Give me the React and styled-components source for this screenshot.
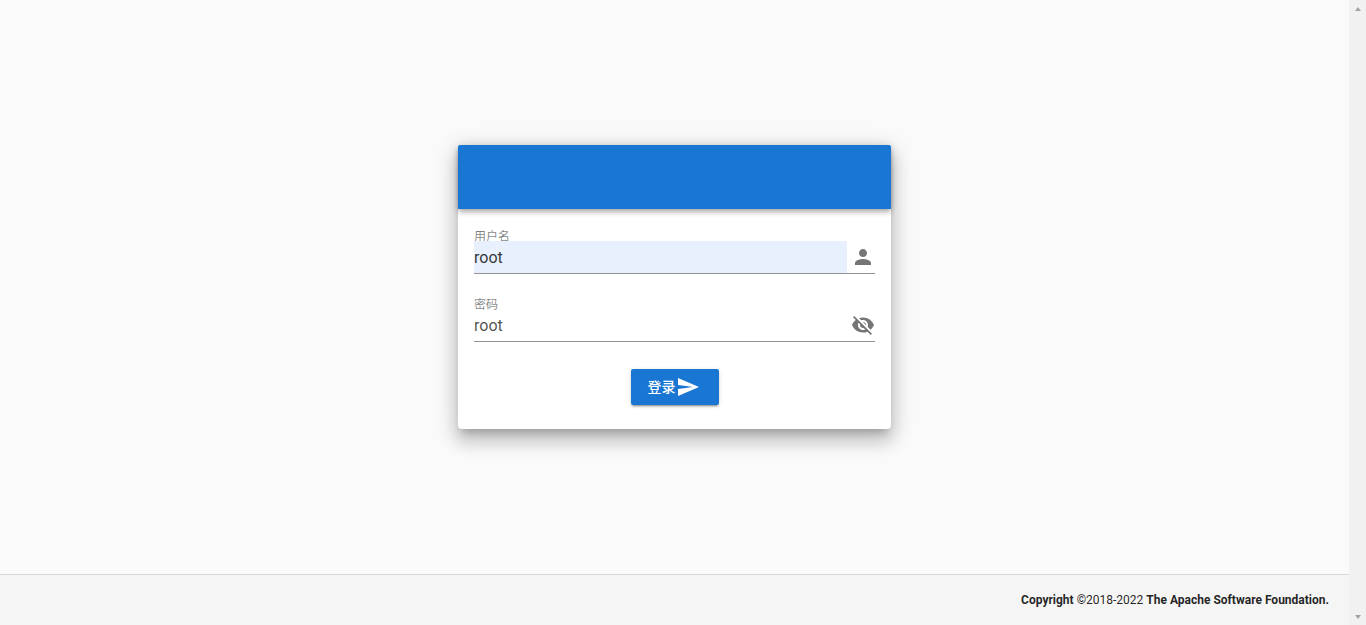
import React from "react"
import styled, { createGlobalStyle } from "styled-components"

const GlobalStyle = createGlobalStyle`
  html, body, #root {
    margin: 0;
    height: 100%;
    overflow: hidden;
  }

  body {
    background: #fafafa;
    font-family: Roboto, "Noto Sans CJK SC", sans-serif;
  }
`

const Window = styled.div`
  display: flex;
  height: 625px;
`

const Page = styled.div`
  flex: 1;
  min-width: 0;
  display: flex;
  flex-direction: column;
`

const Main = styled.main`
  flex: 1;
  display: flex;
  align-items: center;
  justify-content: center;
`

const Card = styled.form`
  width: 433px;
  height: 284px;
  background: #fff;
  border-radius: 4px;
  box-shadow: 0 7px 8px -4px rgba(0, 0, 0, 0.2), 0 12px 17px 2px rgba(0, 0, 0, 0.14),
    0 5px 22px 4px rgba(0, 0, 0, 0.12);
`

const CardHeader = styled.div`
  height: 64px;
  background: #1976d2;
  border-radius: 2px 2px 0 0;
  box-shadow: 0 2px 4px -1px rgba(0, 0, 0, 0.2), 0 4px 5px 0 rgba(0, 0, 0, 0.14),
    0 1px 10px 0 rgba(0, 0, 0, 0.12);
`

const CardBody = styled.div`
  display: flex;
  flex-direction: column;
  padding: 32px 16px 24px;
`

const Field = styled.div`
  position: relative;
  display: flex;
  align-items: center;
  border-bottom: 1px solid rgba(0, 0, 0, 0.42);
  margin-bottom: ${(p) => p.$gap}px;
`

const FieldLabel = styled.label`
  position: absolute;
  top: -11px;
  left: 0;
  font-size: 12px;
  line-height: 14px;
  color: rgba(0, 0, 0, 0.5);
`

const TextInput = styled.input`
  position: relative;
  flex: 1;
  min-width: 0;
  height: 32px;
  padding: 0;
  border: 0;
  outline: 0;
  font: 400 16px Roboto, sans-serif;
  color: ${(p) => (p.$autofilled ? "rgba(0, 0, 0, 0.8)" : "rgba(0, 0, 0, 0.7)")};
  background: ${(p) => (p.$autofilled ? "#e8f0fe" : "transparent")};
`

const FieldIcon = styled.svg`
  flex: none;
  width: 24px;
  height: 24px;
  margin-left: 4px;
  fill: rgba(0, 0, 0, 0.54);
`

const Actions = styled.div`
  display: flex;
  justify-content: center;
`

const SubmitButton = styled.button`
  display: flex;
  align-items: center;
  justify-content: center;
  width: 88px;
  height: 36px;
  padding: 0 2px 0 0;
  border: 0;
  border-radius: 2px;
  background: #1976d2;
  color: #fff;
  font: 500 14px Roboto, "Noto Sans CJK SC", sans-serif;
  box-shadow: 0 3px 1px -2px rgba(0, 0, 0, 0.2), 0 2px 2px 0 rgba(0, 0, 0, 0.14),
    0 1px 5px 0 rgba(0, 0, 0, 0.12);
`

const ButtonLabel = styled.span`
  margin-bottom: 2px;
`

const SendIcon = styled.svg`
  width: 24px;
  height: 24px;
  fill: #fff;
`

const Footer = styled.footer`
  height: 50px;
  display: flex;
  align-items: center;
  justify-content: flex-end;
  padding-right: 20px;
  background: #f5f5f5;
  border-top: 1px solid #d9d9d9;
  font-size: 12px;
  color: rgba(0, 0, 0, 0.87);
`

const FooterText = styled.span`
  white-space: pre;

  b {
    font-weight: 700;
  }
`

const ScrollTrack = styled.div`
  width: 17px;
  flex: none;
  display: flex;
  flex-direction: column;
  justify-content: space-between;
  align-items: center;
  padding: 7px 0 6px;
  box-sizing: border-box;
  background: #f1f1f1;
`

const ScrollArrow = styled.i`
  width: 0;
  height: 0;
  border-left: 3.5px solid transparent;
  border-right: 3.5px solid transparent;
  ${(p) => (p.$down ? "border-top" : "border-bottom")}: 4px solid #a3a3a3;
`

export default function App() {
  return (
    <Window>
      <GlobalStyle />
      <Page>
        <Main>
          <Card onSubmit={(e) => e.preventDefault()}>
            <CardHeader />
            <CardBody>
              <Field $gap={35}>
                <FieldLabel>用户名</FieldLabel>
                <TextInput $autofilled defaultValue="root" />
                <FieldIcon viewBox="0 0 24 24">
                  <path d="M12 12c2.21 0 4-1.79 4-4s-1.79-4-4-4-4 1.79-4 4 1.79 4 4 4zm0 2c-2.67 0-8 1.34-8 4v2h16v-2c0-2.66-5.33-4-8-4z" />
                </FieldIcon>
              </Field>
              <Field $gap={27}>
                <FieldLabel>密码</FieldLabel>
                <TextInput defaultValue="root" />
                <FieldIcon viewBox="0 0 24 24">
                  <path d="M12 7c2.76 0 5 2.24 5 5 0 .65-.13 1.26-.36 1.83l2.92 2.92c1.51-1.26 2.7-2.89 3.43-4.75-1.73-4.39-6-7.5-11-7.5-1.4 0-2.74.25-3.98.7l2.16 2.16C10.74 7.13 11.35 7 12 7zM2 4.27l2.28 2.28.46.46C3.08 8.3 1.78 10.02 1 12c1.73 4.39 6 7.5 11 7.5 1.55 0 3.03-.3 4.38-.84l.42.42L19.73 22 21 20.73 3.27 3 2 4.27zM7.53 9.8l1.55 1.55c-.05.21-.08.43-.08.65 0 1.66 1.34 3 3 3 .22 0 .44-.03.65-.08l1.55 1.55c-.67.33-1.41.53-2.2.53-2.76 0-5-2.24-5-5 0-.79.2-1.53.53-2.2zm4.31-.78l3.15 3.15.02-.16c0-1.66-1.34-3-3-3l-.17.01z" />
                </FieldIcon>
              </Field>
              <Actions>
                <SubmitButton type="submit">
                  <ButtonLabel>登录</ButtonLabel>
                  <SendIcon viewBox="0 0 24 24">
                    <path d="M2.01 21L23 12 2.01 3 2 10l15 2-15 2z" />
                  </SendIcon>
                </SubmitButton>
              </Actions>
            </CardBody>
          </Card>
        </Main>
        <Footer>
          <FooterText>
            <b>Copyright </b>©2018-2022 <b>The Apache Software Foundation.</b>
          </FooterText>
        </Footer>
      </Page>
      <ScrollTrack>
        <ScrollArrow />
        <ScrollArrow $down />
      </ScrollTrack>
    </Window>
  )
}
